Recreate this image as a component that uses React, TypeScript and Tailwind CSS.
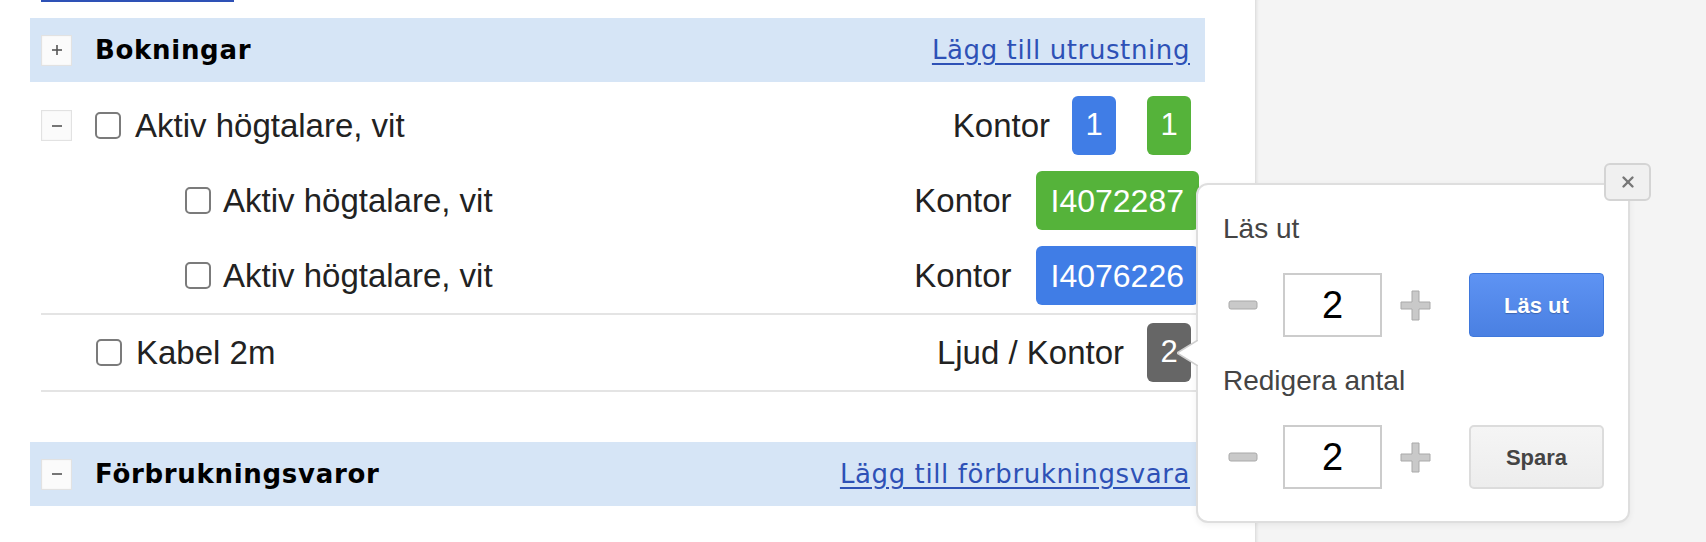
import { X } from "lucide-react";

const sans = "font-['Liberation_Sans',Arial,sans-serif]";
const deja = "font-['DejaVu_Sans',Verdana,sans-serif]";

function ToggleBox({ open }: { open: boolean }) {
  return (
    <span className="flex items-center justify-center w-[31px] h-[31px] bg-[#fbfbfb] border border-[#e2e2e2] shadow-[inset_0_0_2px_rgba(0,0,0,0.06)]">
      <svg width="12" height="12" viewBox="0 0 12 12">
        <path d="M1 6h10" stroke="#555" strokeWidth="1.6" />
        {!open && <path d="M6 1v10" stroke="#555" strokeWidth="1.6" />}
      </svg>
    </span>
  );
}

function Checkbox() {
  return (
    <input
      type="checkbox"
      className="appearance-none shrink-0 w-[26px] h-[27px] border-2 border-[#7b7b7b] rounded-[5px] bg-white"
    />
  );
}

function Badge({ color, wide, children }: { color: string; wide?: boolean; children: React.ReactNode }) {
  return (
    <span
      className={`flex items-center justify-center h-[59px] rounded-[6px] text-white ${
        wide ? "px-[15px] text-[32px]" : "w-[44px] text-[31px]"
      } ${color}`}
    >
      {children}
    </span>
  );
}

function SectionHeader({ open, title, link }: { open: boolean; title: string; link: string }) {
  return (
    <div className="flex items-center h-[64px] bg-[#d6e5f6] pl-[11px] pr-[15px]">
      <ToggleBox open={open} />
      <h2 className={`ml-[23px] text-[26px] font-bold tracking-[0.7px] text-black ${deja}`}>{title}</h2>
      <a href="#" className={`ml-auto text-[26px] tracking-[0.6px] text-[#2e51b6] underline underline-offset-[4px] ${deja}`}>
        {link}
      </a>
    </div>
  );
}

function Stepper({ value, children }: { value: number; children: React.ReactNode }) {
  return (
    <div className="flex items-center">
      <svg width="30" height="10" viewBox="0 0 30 10" className="ml-[5px]">
        <rect x="1" y="1" width="28" height="8" rx="2" fill="#c9c9c9" stroke="#a9a9a9" />
      </svg>
      <input
        readOnly
        value={value}
        className={`ml-[25px] w-[99px] h-[64px] border-2 border-[#cccccc] bg-white text-center text-[38px] text-black outline-none ${sans}`}
      />
      <svg width="31" height="31" viewBox="0 0 31 31" className="ml-[18px]">
        <path d="M12 1h7v11h11v7H19v11h-7V19H1v-7h11z" fill="#c9c9c9" stroke="#a9a9a9" />
      </svg>
      {children}
    </div>
  );
}

export default function App() {
  return (
    <div className={`relative flex h-[542px] w-full overflow-hidden bg-white text-[#222] ${sans}`}>
      <main className="w-[1255px] shrink-0 pl-[30px] pr-[50px]">
        <div className="flex items-end h-[2px] overflow-hidden pl-[11px]">
          <a href="#" className={`inline-block w-[193px] border-b-2 border-[#2e51b6] text-[26px] text-[#2e51b6] ${deja}`}>
            Visa alla
          </a>
        </div>

        <div className="mt-[16px]">
          <SectionHeader open={false} title="Bokningar" link="Lägg till utrustning" />
        </div>

        <div className="ml-[11px] mt-[6px] text-[33px]">
          <div className="flex items-center h-[75px] pr-[14px]">
            <div className="w-[54px] shrink-0">
              <ToggleBox open />
            </div>
            <Checkbox />
            <span className="ml-[14px]">Aktiv högtalare, vit</span>
            <div className="ml-auto flex items-center">
              <span>Kontor</span>
              <span className="ml-[22px]">
                <Badge color="bg-[#407de6]">1</Badge>
              </span>
              <span className="ml-[31px]">
                <Badge color="bg-[#55b33a]">1</Badge>
              </span>
            </div>
          </div>

          <div className="flex items-center h-[75px] pr-[6px]">
            <div className="w-[144px] shrink-0" />
            <Checkbox />
            <span className="ml-[12px]">Aktiv högtalare, vit</span>
            <div className="ml-auto flex items-center">
              <span>Kontor</span>
              <span className="ml-[24px]">
                <Badge color="bg-[#55b33a]" wide>I4072287</Badge>
              </span>
            </div>
          </div>

          <div className="flex items-center h-[77px] pr-[6px] border-b-2 border-[#e4e4e4]">
            <div className="w-[144px] shrink-0" />
            <Checkbox />
            <span className="ml-[12px]">Aktiv högtalare, vit</span>
            <div className="ml-auto flex items-center">
              <span>Kontor</span>
              <span className="ml-[24px]">
                <Badge color="bg-[#407de6]" wide>I4076226</Badge>
              </span>
            </div>
          </div>

          <div className="flex items-center h-[77px] pr-[14px] border-b-2 border-[#e4e4e4]">
            <div className="w-[55px] shrink-0" />
            <Checkbox />
            <span className="ml-[14px]">Kabel 2m</span>
            <div className="ml-auto flex items-center">
              <span>Ljud / Kontor</span>
              <span className="ml-[23px]">
                <Badge color="bg-[#666666]">2</Badge>
              </span>
            </div>
          </div>
        </div>

        <div className="mt-[50px]">
          <SectionHeader open title="Förbrukningsvaror" link="Lägg till förbrukningsvara" />
        </div>
      </main>

      <aside className="flex-1 bg-[#f4f4f4] border-l border-[#e0e0e0] shadow-[inset_3px_0_3px_-2px_rgba(0,0,0,0.08)]" />

      {/* popover for the selected row */}
      <div className="absolute left-[1196px] top-[183px] w-[434px] rounded-[12px] border-2 border-[#dedede] bg-white pt-[28px] pl-[25px] pr-[24px] pb-[32px] shadow-[0_2px_6px_rgba(0,0,0,0.06)]">
        <svg width="21" height="26" viewBox="0 0 21 26" className="absolute left-[-21px] top-[155px]">
          <polyline points="21,0 0,13 21,26" fill="white" stroke="#cfcfcf" strokeWidth="1.5" />
        </svg>

        <button className="absolute right-[-23px] top-[-22px] flex items-center justify-center w-[47px] h-[38px] rounded-[6px] border-2 border-[#d4d4d4] bg-[#f0f0f0] text-[#777]">
          <X size={18} strokeWidth={3.2} />
        </button>

        <p className="text-[28px] leading-[32px] text-[#444]">Läs ut</p>
        <div className="mt-[28px]">
          <Stepper value={2}>
            <button className="ml-[38px] w-[135px] h-[64px] rounded-[4px] border border-[#3f78dc] bg-gradient-to-b from-[#5e93f3] to-[#4a80e2] text-[22px] font-bold text-white [text-shadow:0_1px_1px_rgba(0,0,0,0.25)]">
              Läs ut
            </button>
          </Stepper>
        </div>

        <p className="mt-[28px] text-[28px] leading-[32px] text-[#444]">Redigera antal</p>
        <div className="mt-[28px]">
          <Stepper value={2}>
            <button className="ml-[38px] w-[135px] h-[64px] rounded-[5px] border-2 border-[#dcdcdc] bg-gradient-to-b from-[#f5f5f5] to-[#ededed] text-[22px] font-bold text-[#444]">
              Spara
            </button>
          </Stepper>
        </div>
      </div>
    </div>
  );
}
